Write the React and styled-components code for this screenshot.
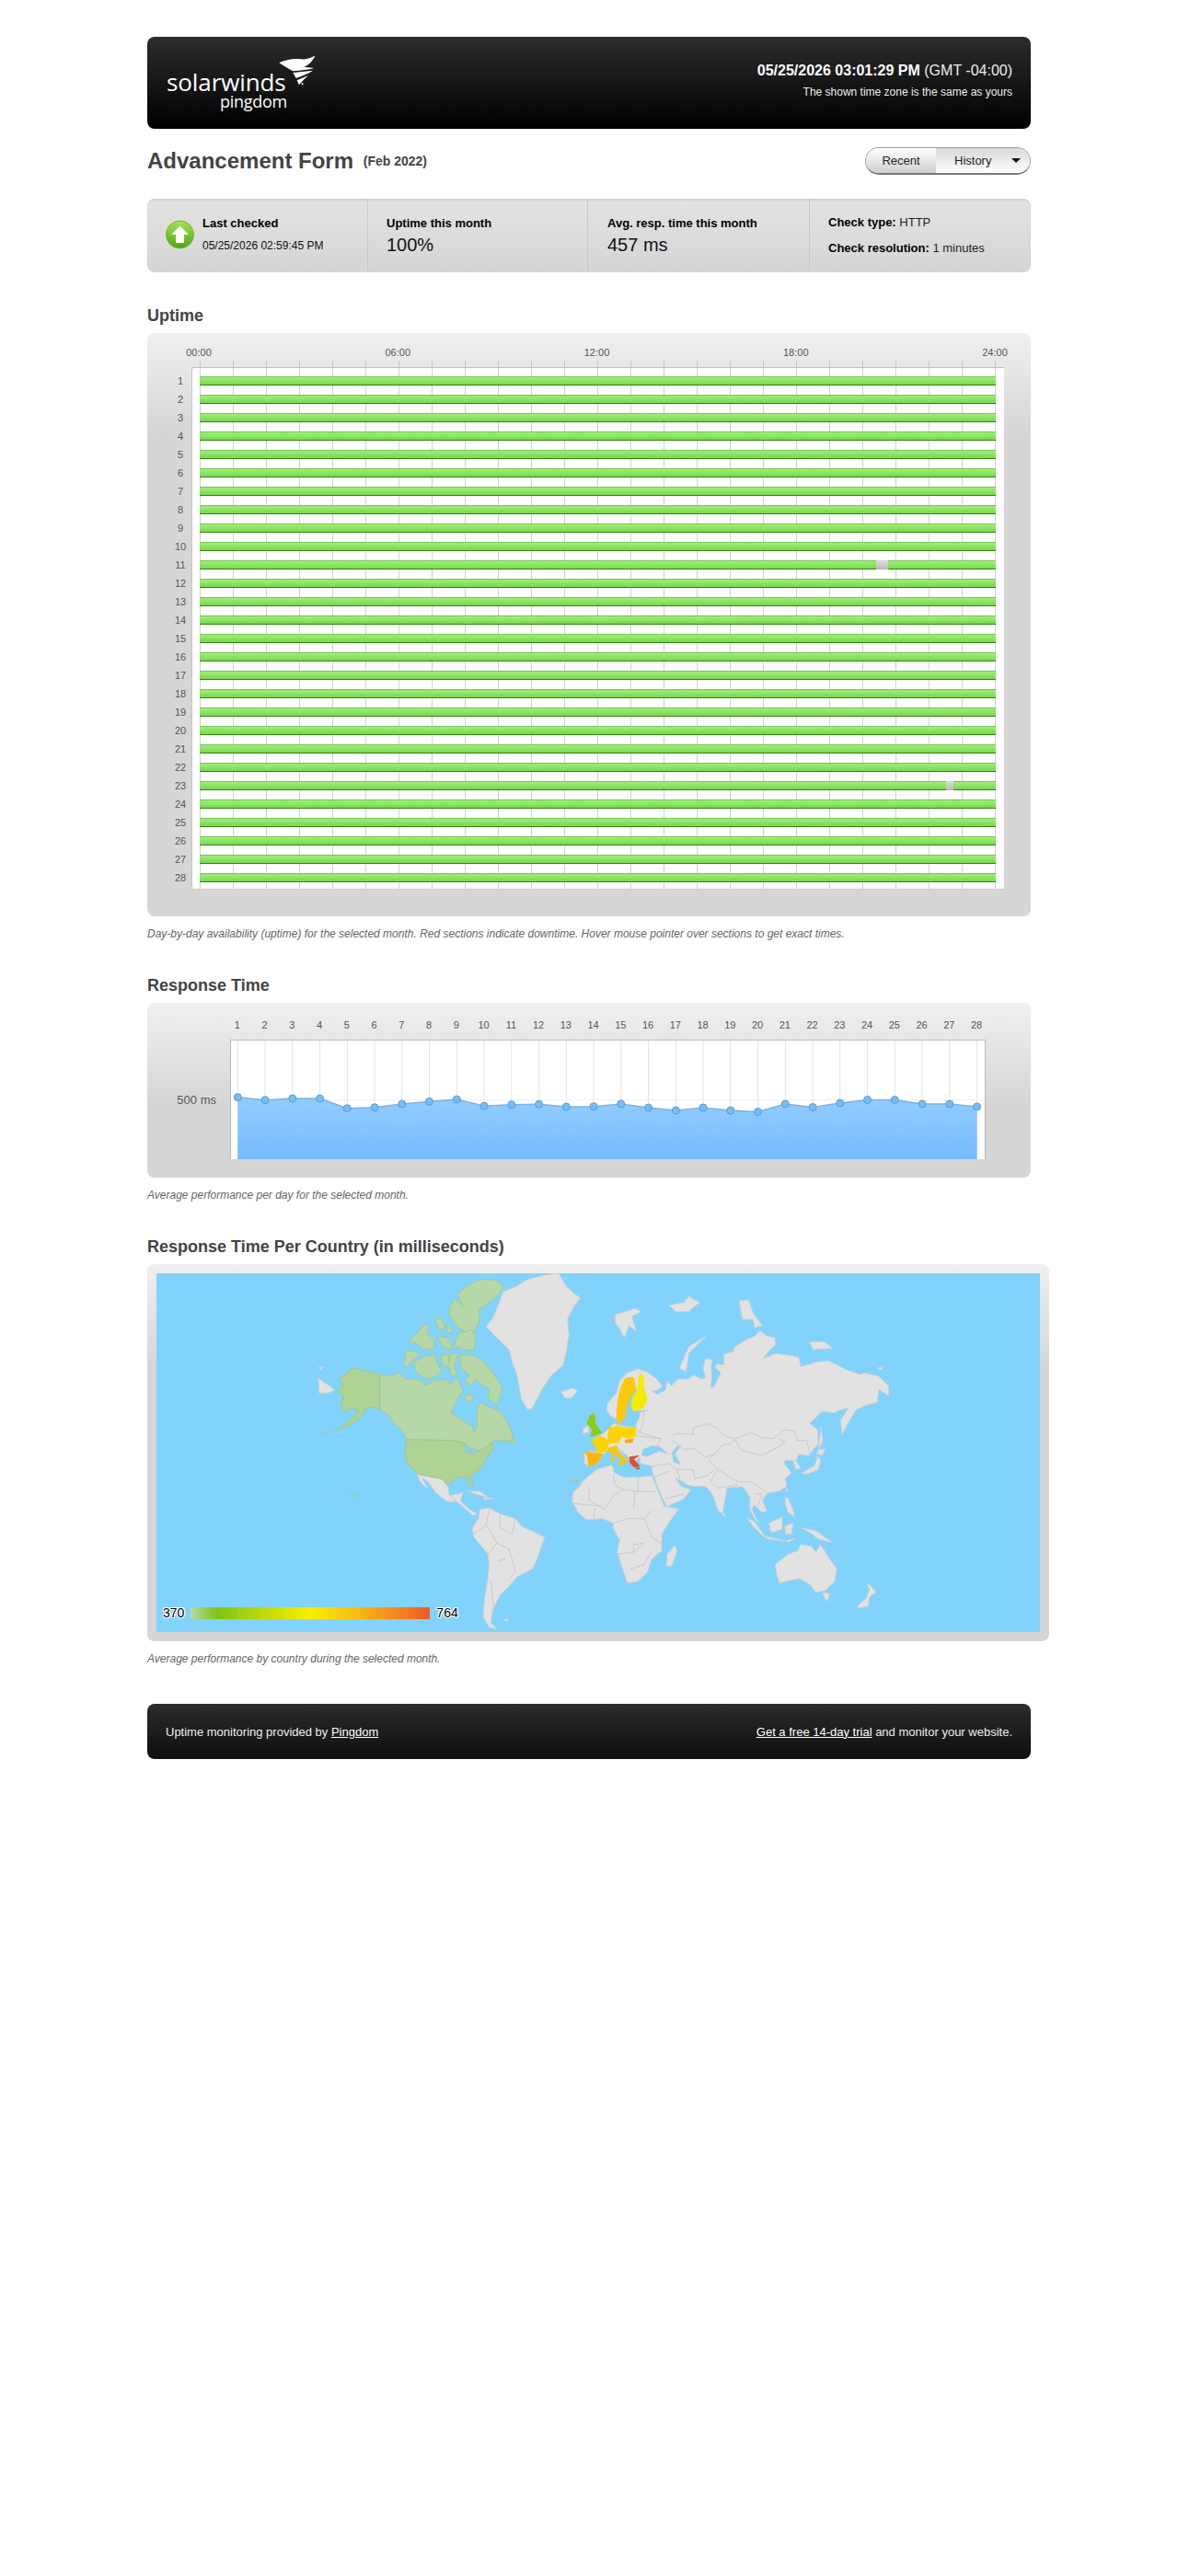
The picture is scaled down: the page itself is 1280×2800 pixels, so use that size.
import React from "react";
import styled, { createGlobalStyle } from "styled-components";

const GlobalStyle = createGlobalStyle`
  html, body {
    margin: 0;
    padding: 0;
    background: #fff;
  }
  body {
    font-family: "Liberation Sans", Arial, sans-serif;
    font-size: 13px;
    color: #444;
  }
`;

const Page = styled.div`
  width: 960px;
  margin: 0 auto;
  padding: 40px 0 60px;
`;

const DarkBar = styled.div`
  display: flex;
  justify-content: space-between;
  align-items: center;
  box-sizing: border-box;
  height: ${(props) => props.$height}px;
  padding: 0 20px;
  border-radius: 8px;
  background: linear-gradient(#2c2c2c, ${(props) => props.$end});
  color: #eee;
`;

const Logo = styled.div`
  position: relative;
  width: 170px;
  height: 70px;
  color: #fff;
  font-family: "Open Sans", sans-serif;
`;

const LogoName = styled.div`
  position: absolute;
  left: 1px;
  top: 16px;
  font-size: 26px;
  line-height: 36px;
  letter-spacing: -0.1px;
`;

const LogoSub = styled.div`
  position: absolute;
  left: 59px;
  top: 43px;
  font-size: 18px;
  line-height: 24px;
  letter-spacing: -0.3px;
`;

const LogoWing = styled.svg`
  position: absolute;
  left: 0;
  top: 0;
`;

const Clock = styled.div`
  text-align: right;
  margin-top: -7px;
`;

const ClockTime = styled.div`
  font-size: 16px;
  line-height: 20px;
  color: #eee;

  strong {
    color: #fff;
  }
`;

const ClockNote = styled.div`
  font-size: 12px;
  line-height: 14px;
  margin-top: 6px;
`;

const TitleRow = styled.div`
  display: flex;
  justify-content: space-between;
  align-items: center;
  height: 30px;
  margin-top: 20px;
`;

const Title = styled.h1`
  margin: 0;
  font-size: 24px;
  line-height: 30px;
  font-weight: bold;
  color: #444;

  small {
    font-size: 14px;
    margin-left: 4px;
    vertical-align: 3px;
  }
`;

const Toggle = styled.div`
  display: flex;
  width: 180px;
  height: 30px;
  box-sizing: border-box;
  border: 1px solid #9a9a9a;
  border-bottom: 2px solid #777;
  border-radius: 15px;
  overflow: hidden;
`;

const ToggleItem = styled.div`
  display: flex;
  align-items: center;
  justify-content: ${(props) => (props.$active ? "space-between" : "center")};
  box-sizing: border-box;
  width: ${(props) => (props.$active ? 102 : 76)}px;
  padding: ${(props) => (props.$active ? "0 10px 0 20px" : "0")};
  font-size: 13px;
  color: #222;
  background: ${(props) =>
    props.$active
      ? "linear-gradient(#d8d8d8, #fff)"
      : "linear-gradient(#fff, #cfcfcf)"};
`;

const Caret = styled.span`
  width: 0;
  height: 0;
  border-left: 5px solid transparent;
  border-right: 5px solid transparent;
  border-top: 5px solid #111;
`;

const StatsBar = styled.div`
  display: flex;
  height: 80px;
  margin-top: 26px;
  border-radius: 8px;
  background: linear-gradient(#e3e3e3, #d5d5d5);
  box-shadow: inset 0 2px 2px rgba(0, 0, 0, 0.08);
  color: #000;
`;

const StatCell = styled.div`
  box-sizing: border-box;
  display: ${(props) => (props.$row ? "flex" : "block")};
  gap: 8px;
  width: ${(props) => props.$width}px;
  padding: ${(props) => props.$top || 20}px 0 0 ${(props) => props.$left || 20}px;
  border-left: ${(props) => (props.$first ? "none" : "1px solid #c8c8c8")};
`;

const StatLabel = styled.div`
  font-size: 13px;
  line-height: 14px;
  font-weight: bold;
`;

const StatDate = styled.div`
  font-size: 12px;
  line-height: 14px;
  margin-top: 10px;
  color: #111;
`;

const StatValue = styled.div`
  font-size: 20px;
  line-height: 24px;
  margin-top: 4px;
  color: #111;
`;

const StatLine = styled.div`
  font-size: 13px;
  line-height: 14px;
  margin-top: ${(props) => props.$gap || 0}px;
  color: #222;

  strong {
    color: #000;
  }
`;

const StatusIcon = styled.svg`
  flex: none;
  margin-top: 3px;
`;

const Heading = styled.h2`
  margin: ${(props) => props.$top}px 0 8px;
  font-size: 18px;
  line-height: 22px;
  font-weight: bold;
  color: #444;
`;

const Panel = styled.div`
  box-sizing: border-box;
  width: ${(props) => props.$width || 960}px;
  padding: ${(props) => props.$padding};
  border-radius: 8px;
  background: linear-gradient(#f0f0f0, #d6d6d6 110px);
`;

const Caption = styled.p`
  margin: 12px 0 0;
  font-size: 12px;
  line-height: 14px;
  font-style: italic;
  color: #666;
`;

const HourAxis = styled.div`
  display: flex;
  justify-content: space-between;
  width: 895px;
  margin-left: 41px;
`;

const AxisLabel = styled.span`
  width: ${(props) => props.$width}px;
  flex: none;
  text-align: center;
  font-size: 11px;
  line-height: 14px;
  color: #555;
`;

const Ticks = styled.div`
  width: 865px;
  height: 7px;
  margin: 2px 0 0 57px;
  background-image: linear-gradient(90deg, #c4c4c4 1px, transparent 1px);
  background-size: 36px 100%;
`;

const UptimeBody = styled.div`
  display: flex;
`;

const DayColumn = styled.div`
  display: flex;
  flex-direction: column;
  gap: 10px;
  box-sizing: border-box;
  width: 48px;
  padding: 10px 0 0 24px;
`;

const DayLabel = styled.div`
  width: 24px;
  text-align: center;
  font-size: 11px;
  line-height: 10px;
  height: 10px;
  color: #555;
`;

const UptimePlot = styled.div`
  display: flex;
  flex-direction: column;
  gap: 10px;
  box-sizing: border-box;
  width: 883px;
  padding: 9px 0 7px 8px;
  background-color: #fff;
  background-image: linear-gradient(90deg, #d2d2d2 1px, transparent 1px);
  background-size: 36px 100%;
  background-position: 8px 0;
  border-top: 1px solid #bdbdbd;
  border-left: 1px solid #c4c4c4;
  border-bottom: 1px solid #cfcfcf;
  border-radius: 3px 0 0 3px;
`;

const Bar = styled.div`
  display: flex;
  width: 865px;
  height: 10px;
`;

const BarPart = styled.div`
  box-sizing: border-box;
  flex: ${(props) => (props.$down ? "none" : "1")};
  width: ${(props) => props.$width || 0}px;
  background: ${(props) =>
    props.$down
      ? "linear-gradient(#dcdcdc, #bcbcbc)"
      : "linear-gradient(#9fef74, #78d854)"};
  border-top: 1px solid ${(props) => (props.$down ? "#d8d8d8" : "#76c655")};
  border-bottom: 1px solid ${(props) => (props.$down ? "#b8b8b8" : "#38800c")};
`;

const DayAxis = styled.div`
  display: flex;
  margin-left: 83px;
`;

const ChartRow = styled.div`
  display: flex;
  margin-top: 9px;
`;

const YAxis = styled.div`
  display: flex;
  align-items: center;
  justify-content: flex-end;
  box-sizing: border-box;
  width: 90px;
  padding-right: 15px;
  font-size: 13px;
  color: #555;
`;

const ChartFrame = styled.div`
  box-sizing: border-box;
  width: 821px;
  height: 130px;
  background: #fff;
  border: 1px solid #b8b8b8;
  border-bottom: none;

  svg {
    display: block;
  }
`;

const MapBox = styled.div`
  position: relative;
  width: 960px;
  height: 390px;
  background: #82d3fb;
  overflow: hidden;

  svg {
    display: block;
  }
`;

const Legend = styled.div`
  position: absolute;
  left: 7px;
  top: 362px;
  display: flex;
  align-items: center;
  gap: 7px;
  font-size: 14px;
  line-height: 14px;
  color: #000;
  text-shadow: 1px 0 0 #fff, -1px 0 0 #fff, 0 1px 0 #fff, 0 -1px 0 #fff,
    1px 1px 0 #fff, -1px -1px 0 #fff, 1px -1px 0 #fff, -1px 1px 0 #fff;
`;

const LegendScale = styled.div`
  width: 260px;
  height: 13px;
  background-image: linear-gradient(
      90deg,
      rgba(255, 255, 255, 0.1) 1px,
      transparent 1px
    ),
    linear-gradient(
      90deg,
      #b7d7a8 0%,
      #7cc518 11%,
      #bcd80c 30%,
      #f9ee00 50%,
      #f9be10 68%,
      #f58a1f 85%,
      #f15a24 100%
    );
  background-size: 26px 100%, 100% 100%;
`;

const Footer = styled(DarkBar)`
  margin-top: 42px;
  font-size: 13px;

  a {
    color: #fff;
    text-decoration: underline;
  }
`;

const hours = ["00:00", "06:00", "12:00", "18:00", "24:00"];
const days = Array.from({ length: 28 }, (_, i) => i + 1);

// [start px, width px] of the unknown-status patches
const outages = { 11: [735, 13], 23: [811, 8] };

const responseY = [
  1192.7, 1195.7, 1194, 1194, 1204.7, 1203.7, 1200, 1197.3, 1195, 1202.3,
  1200.7, 1200.3, 1203, 1202.7, 1200, 1204, 1207, 1204, 1207, 1208.5, 1200,
  1203.5, 1199, 1195.5, 1195.5, 1200, 1200, 1203,
];
const chartPoints = responseY.map((y, i) => [7.3 + i * 29.75, y - 1131]);
const linePath = chartPoints.map((p) => p.join(",")).join(" ");
const areaPath = `${chartPoints[0][0]},129 ${linePath} ${chartPoints[27][0]},129`;

const SEA = "#82d3fb";
const GRAY = "#e2e2e2";
const CANADA = "#b6d7a8";
const USA = "#aed394";

// traced from the left half of the map
const westLand = [
  // greenland, iceland, svalbard
  "M620,60 L660,45 700,20 760,5 800,0 825,40 850,65 872,80 850,110 830,150 835,200 825,260 815,300 780,330 745,380 715,440 700,445 680,410 665,330 650,290 640,250 600,210 565,175 590,140 610,90Z",
  "M810,385 L850,375 862,385 840,408 820,405Z",
  "M985,135 L1020,125 1050,115 1070,125 1040,140 1055,190 1030,170 1015,210 1000,180 985,160Z",
  // chukotka tip
  "M18,342 L50,365 72,380 45,392 20,390Z",
  "M20,305 L32,308 24,314Z",
  // mexico and central america
  "M340,655 L390,665 420,670 440,695 445,725 470,720 490,715 480,740 510,770 535,785 520,790 500,770 470,745 440,745 400,715 375,680 355,665 375,705 350,680Z",
  "M505,710 L545,712 570,730 530,720Z",
  "M555,730 L590,735 560,738Z",
  // south america
  "M545,770 L575,765 610,785 660,800 680,825 755,860 735,920 715,965 665,990 640,1020 610,1050 585,1100 580,1140 600,1160 575,1155 555,1120 560,1060 570,1000 575,950 570,915 525,860 520,830 540,800Z",
  "M622,1130 L638,1127 630,1136Z",
];

const westBorders = [
  "M575,770 L565,820 525,850",
  "M565,820 L600,880 640,900 660,970 640,1000",
  "M600,880 L570,915",
  "M600,940 L630,930",
  "M580,1000 L590,1100",
  "M660,800 L650,850",
  "M610,790 L610,830 650,850",
  "M445,725 L470,745",
];

const canadaLand = [
  // arctic archipelago
  "M470,70 L510,35 550,20 600,22 622,45 600,75 570,100 545,115 540,130 545,150 530,185 500,192 470,175 445,135 445,110 465,85 490,105Z",
  "M475,195 L520,185 532,215 525,250 490,250 462,235 468,210Z",
  "M310,225 L340,195 365,165 380,175 370,195 395,215 395,245 360,250 335,225Z",
  "M398,145 L420,150 432,180 410,182Z",
  "M435,165 L458,190 440,197Z",
  "M405,205 L440,210 458,248 425,242Z",
  "M295,300 L305,252 338,255 345,268 320,290 305,305Z",
  "M330,290 L365,270 398,265 405,290 420,320 385,345 360,340 335,320Z",
  "M415,268 L442,262 445,300 425,305Z",
  "M450,260 L474,262 462,300 470,332 450,337 442,300Z",
  "M478,270 L495,265 525,268 555,285 590,330 618,375 600,430 570,405 575,375 545,360 530,345 515,365 495,355 510,330 485,315Z",
  "M495,400 L520,395 520,420 500,415Z",
  "M632,520 L665,555 635,550Z",
  // mainland with hudson bay cut out of the outline
  "M218,330 L250,335 285,325 300,345 340,345 370,365 395,350 430,345 450,360 470,340 490,385 470,410 450,455 490,480 520,500 525,520 535,500 535,440 545,420 580,440 610,450 635,490 650,520 650,545 620,545 590,545 560,570 525,585 510,575 495,555 460,545 305,542 290,510 265,490 245,460 218,445Z",
];

const usaLand = [
  "M85,345 L135,308 175,320 218,328 218,445 195,435 175,440 160,465 130,490 80,512 120,480 150,445 135,440 100,450 92,425 100,400 80,385 100,360Z",
  "M305,542 L460,545 495,555 510,590 530,585 560,570 585,555 590,570 565,600 550,635 510,665 525,695 510,690 500,665 470,665 440,690 420,670 390,665 345,655 310,625 300,590Z",
  "M28,520 L40,518 36,522Z",
  "M50,516 L58,514 56,519Z",
  "M122,712 L130,716 126,718Z",
  "M138,720 L147,726 140,729Z",
];

const greatLakes = [
  "M490,565 L505,560 515,585 505,590Z",
  "M515,570 L540,580 520,590Z",
];

// traced from the right half of the map
const eastLand = [
  // eurasia outline, clockwise from norway
  "M130,465 L118,445 120,425 150,390 160,350 185,325 220,312 250,322 280,345 300,368 285,380 265,385 285,395 310,380 315,350 328,368 350,345 385,345 400,332 430,345 440,340 432,310 440,278 462,282 458,300 460,345 455,370 465,375 480,345 490,325 470,305 478,295 500,300 500,265 530,255 535,240 575,215 600,205 618,187 640,205 665,210 668,235 650,250 625,280 665,262 720,268 745,275 750,305 800,290 840,285 900,315 945,330 960,325 1003,335 1037,368 1037,400 1005,378 1000,420 965,430 930,445 915,470 885,525 880,480 905,440 880,445 860,455 820,450 780,490 805,510 808,555 775,595 745,590 735,612 750,635 735,640 725,610 700,610 695,620 720,650 700,670 705,695 680,710 640,718 625,740 640,775 625,780 600,755 590,765 600,790 615,815 600,800 585,770 585,730 560,695 510,700 495,785 480,770 462,720 440,695 400,695 380,690 340,665 360,695 392,705 370,735 315,760 300,735 272,665 265,640 268,630 228,620 225,598 225,595 205,630 192,605 185,595 155,570 150,570 178,600 185,610 180,605 150,562 125,575 105,592 90,615 60,630 45,620 45,582 100,582 100,562 70,545 95,530 110,520 125,505 140,490 165,497 212,503 215,490 225,470 225,455 255,447 205,448 198,430 205,402 220,382 205,378 192,400 180,440 178,465 160,490 148,475Z",
  // arctic islands
  "M355,310 L385,240 440,205 435,212 385,260 380,300 375,320Z",
  "M320,105 L370,95 385,75 420,95 385,125 345,125Z",
  "M550,90 L580,88 595,130 625,170 600,178 595,150 560,150Z",
  "M780,225 L825,222 855,245 790,248Z",
  "M1000,310 L1015,305 1015,315Z",
  // ireland and the east asian islands
  "M42,505 L60,498 58,520 40,522Z",
  "M815,500 L822,545 800,600 810,570Z",
  "M808,575 L830,572 820,595 805,590Z",
  "M752,652 L795,628 806,598 815,610 808,640 770,655Z",
  "M705,700 L708,712 700,712Z",
  // africa, madagascar
  "M5,745 L8,715 30,695 38,680 85,640 135,625 142,650 175,665 220,665 265,660 305,760 352,768 330,800 297,850 297,905 265,930 250,975 220,1005 185,1010 170,965 152,910 160,870 138,830 140,815 105,800 50,803 25,780Z",
  "M340,888 L347,905 330,955 312,955 315,915Z",
  // south east asia
  "M500,780 L505,793 497,790Z",
  "M575,798 L600,810 635,860 625,855 595,825Z",
  "M625,855 L690,870 700,875 640,865Z",
  "M645,815 L690,795 690,835 655,845Z",
  "M700,825 L725,815 720,850 700,850Z",
  "M750,830 L800,840 855,880 805,865 780,845Z",
  "M700,730 L710,735 725,770 730,795 710,780 700,755Z",
  "M700,872 L730,865 712,877Z",
  // australia, new zealand
  "M667,950 L710,915 740,905 750,885 785,890 800,910 815,885 840,925 868,965 860,1005 830,1035 800,1040 780,1015 745,995 680,1010 672,980Z",
  "M820,1042 L845,1045 835,1070Z",
  "M965,1010 L990,1030 995,1040 975,1055 970,1085 940,1092 935,1085 965,1060 975,1030Z",
];

const eastWater = [
  "M235,575 L265,562 290,565 320,590 290,580 250,597 232,595Z",
  "M345,565 L360,560 340,590 360,625 335,615 330,585Z",
];

const eastBorders = [
  "M330,530 L345,522 400,525 400,505 445,490 480,505 500,530 535,540 590,520 620,535 660,540 700,510 730,515 740,545 770,545 780,590",
  "M535,540 L555,575 620,595 680,565 700,550 680,540",
  "M330,545 L370,575 400,570 440,600 470,590 495,560 525,555 535,540",
  "M470,590 L450,610 480,640 545,680 590,680 640,715",
  "M400,640 L405,670 445,660 470,640",
  "M345,640 L400,640",
  "M265,630 L320,620 345,640 360,680",
  "M270,665 L320,645",
  "M310,735 L370,720",
  "M480,640 L455,680 480,700 545,690",
  "M240,450 L235,490 225,520 295,540 280,570",
  "M215,530 L295,540",
  "M212,503 L225,520",
  "M150,470 L175,400 205,340",
  "M600,720 L625,720 610,760",
  "M730,615 L745,590",
  // africa
  "M60,695 L60,740 110,770",
  "M140,655 L145,690 170,705 220,712 275,712",
  "M220,665 L220,712",
  "M110,770 L140,725 170,705",
  "M205,770 L210,712",
  "M5,750 L100,760",
  "M140,815 L185,800 240,800 265,770",
  "M240,800 L265,860 295,880",
  "M155,915 L205,910 240,880",
  "M205,910 L205,885 240,880",
  "M195,965 L240,950 265,905",
  "M75,800 L78,765",
];

const countries = [
  { fill: "#8fc90e", d: "M62,465 L78,458 80,490 100,520 65,532 72,510 55,490Z" },
  { fill: "#ffd306", d: "M70,545 L95,530 125,545 120,580 90,585 78,560Z" },
  { fill: "#ffd306", d: "M125,505 L160,497 165,530 158,552 125,553 122,530Z" },
  { fill: "#ffd306", d: "M163,503 L212,503 212,530 190,540 165,530Z" },
  { fill: "#f6a81a", d: "M178,545 L205,540 200,552 180,552Z" },
  { fill: "#fdc70a", d: "M180,342 L205,340 213,380 195,400 180,440 180,465 160,490 150,475 155,410 165,370Z" },
  { fill: "#f2ec00", d: "M225,328 L238,335 237,370 250,410 235,440 205,448 198,430 205,400 220,380Z" },
  { fill: "#fbb511", d: "M45,582 L105,590 85,620 60,630 55,595Z" },
  { fill: "#f9c40a", d: "M125,570 L150,562 155,585 185,610 165,628 155,620 170,612 145,590 125,580Z" },
  { fill: "#f9c40a", d: "M135,588 L142,612 133,612Z" },
  { fill: "#e4492a", d: "M192,600 L222,595 205,605 225,630 205,630 195,618Z" },
  { fill: "#e4492a", d: "M210,634 L225,636 222,639Z" },
  { fill: "#f6a81a", d: "M5,676 L10,676 8,679Z" },
  { fill: "#f6a81a", d: "M18,676 L23,676 20,679Z" },
];

const WorldMap = () => (
  <svg width="960" height="390" viewBox="0 0 960 390">
    <g
      transform="translate(170 0) scale(0.3333)"
      strokeWidth="3"
      strokeLinejoin="round"
    >
      {westLand.map((d) => (
        <path key={d} d={d} fill={GRAY} stroke="#d0d0d0" />
      ))}
      {westBorders.map((d) => (
        <path key={d} d={d} fill="none" stroke="#c9c9c9" />
      ))}
      {canadaLand.map((d) => (
        <path key={d} d={d} fill={CANADA} stroke="#a5c894" />
      ))}
      {usaLand.map((d) => (
        <path key={d} d={d} fill={USA} stroke="#a0c888" />
      ))}
      {greatLakes.map((d) => (
        <path key={d} d={d} fill={SEA} stroke="#a5c894" />
      ))}
    </g>
    <g
      transform="translate(450 0) scale(0.3333)"
      strokeWidth="3"
      strokeLinejoin="round"
    >
      {eastLand.map((d) => (
        <path key={d} d={d} fill={GRAY} stroke="#d0d0d0" />
      ))}
      {eastWater.map((d) => (
        <path key={d} d={d} fill={SEA} stroke="#d0d0d0" />
      ))}
      {eastBorders.map((d) => (
        <path key={d} d={d} fill="none" stroke="#c9c9c9" />
      ))}
      {countries.map((c) => (
        <path key={c.d} d={c.d} fill={c.fill} stroke={c.fill} />
      ))}
    </g>
  </svg>
);

const ResponseChart = () => (
  <svg width="819" height="129" viewBox="0 0 819 129">
    <defs>
      <linearGradient id="areaFill" x1="0" y1="0" x2="0" y2="1">
        <stop offset="0" stopColor="#8fcbff" />
        <stop offset="1" stopColor="#6fb8ff" />
      </linearGradient>
    </defs>
    <line x1="0" x2="819" y1="64.5" y2="64.5" stroke="#f0f0f0" />
    {chartPoints.map(([x]) => (
      <line key={x} x1={x} x2={x} y1="0" y2="129" stroke="#e4e4e4" />
    ))}
    <polygon points={areaPath} fill="url(#areaFill)" fillOpacity="0.96" />
    <polyline
      points={linePath}
      fill="none"
      stroke="#7eb3dd"
      strokeWidth="1.5"
    />
    {chartPoints.map(([x, y]) => (
      <circle
        key={x}
        cx={x}
        cy={y}
        r="4"
        fill="#74bdf6"
        stroke="#5c9ccf"
      />
    ))}
  </svg>
);

const App = () => (
  <>
    <GlobalStyle />
    <Page>
      <DarkBar $height={100} $end="#000">
        <Logo>
          <LogoWing width="170" height="70" viewBox="0 0 170 70">
            <g fill="#fff" transform="translate(-30 -25) scale(0.3333)">
              <path d="M460,115 C478,106 505,100 530,103 C545,105 558,100 577,92 C570,108 558,122 540,128 L575,132 C555,137 530,140 505,142 C490,135 475,125 460,115Z" />
              <path d="M505,147 L570,140 C555,150 535,158 515,165Z" />
              <path d="M518,172 L556,156 C545,165 535,175 525,187Z" />
              <circle cx="536" cy="184" r="3" />
            </g>
          </LogoWing>
          <LogoName>solarwinds</LogoName>
          <LogoSub>pingdom</LogoSub>
        </Logo>
        <Clock>
          <ClockTime>
            <strong>05/25/2026 03:01:29 PM</strong> (GMT -04:00)
          </ClockTime>
          <ClockNote>The shown time zone is the same as yours</ClockNote>
        </Clock>
      </DarkBar>

      <TitleRow>
        <Title>
          Advancement Form <small>(Feb 2022)</small>
        </Title>
        <Toggle>
          <ToggleItem>Recent</ToggleItem>
          <ToggleItem $active>
            History
            <Caret />
          </ToggleItem>
        </Toggle>
      </TitleRow>

      <StatsBar>
        <StatCell $row $first $width={239} $left={20} $top={20}>
          <StatusIcon width="32" height="32" viewBox="0 0 32 32">
            <defs>
              <linearGradient id="upFill" x1="0" y1="0" x2="0" y2="1">
                <stop offset="0" stopColor="#a4e35a" />
                <stop offset="1" stopColor="#4da510" />
              </linearGradient>
            </defs>
            <circle cx="15.5" cy="16" r="15" fill="url(#upFill)" stroke="#6fb52c" />
            <path
              d="M15.5 7 L24 15.5 L19.5 15.5 L19.5 24.5 L11.5 24.5 L11.5 15.5 L7 15.5 Z"
              fill="#fff"
              stroke="#fff"
              strokeLinejoin="round"
            />
          </StatusIcon>
          <div>
            <StatLabel>Last checked</StatLabel>
            <StatDate>05/25/2026 02:59:45 PM</StatDate>
          </div>
        </StatCell>
        <StatCell $width={239}>
          <StatLabel>Uptime this month</StatLabel>
          <StatValue>100%</StatValue>
        </StatCell>
        <StatCell $width={241} $left={21}>
          <StatLabel>Avg. resp. time this month</StatLabel>
          <StatValue>457 ms</StatValue>
        </StatCell>
        <StatCell $width={241} $top={19}>
          <StatLine>
            <strong>Check type:</strong> HTTP
          </StatLine>
          <StatLine $gap={14}>
            <strong>Check resolution:</strong> 1 minutes
          </StatLine>
        </StatCell>
      </StatsBar>

      <Heading $top={36}>Uptime</Heading>
      <Panel $padding="14px 0 29px">
        <HourAxis>
          {hours.map((h) => (
            <AxisLabel key={h} $width={30}>
              {h}
            </AxisLabel>
          ))}
        </HourAxis>
        <Ticks />
        <UptimeBody>
          <DayColumn>
            {days.map((d) => (
              <DayLabel key={d}>{d}</DayLabel>
            ))}
          </DayColumn>
          <UptimePlot>
            {days.map((d) => (
              <Bar key={d}>
                {outages[d] ? (
                  <>
                    <BarPart style={{ flex: `0 0 ${outages[d][0]}px` }} />
                    <BarPart $down $width={outages[d][1]} />
                    <BarPart />
                  </>
                ) : (
                  <BarPart />
                )}
              </Bar>
            ))}
          </UptimePlot>
        </UptimeBody>
      </Panel>
      <Caption>
        Day-by-day availability (uptime) for the selected month. Red sections
        indicate downtime. Hover mouse pointer over sections to get exact times.
      </Caption>

      <Heading $top={38}>Response Time</Heading>
      <Panel $padding="17px 0 20px">
        <DayAxis>
          {days.map((d) => (
            <AxisLabel key={d} $width={29.75}>
              {d}
            </AxisLabel>
          ))}
        </DayAxis>
        <ChartRow>
          <YAxis>500 ms</YAxis>
          <ChartFrame>
            <ResponseChart />
          </ChartFrame>
        </ChartRow>
      </Panel>
      <Caption>Average performance per day for the selected month.</Caption>

      <Heading $top={38}>Response Time Per Country (in milliseconds)</Heading>
      <Panel $width={980} $padding="10px">
        <MapBox>
          <WorldMap />
          <Legend>
            <span>370</span>
            <LegendScale />
            <span>764</span>
          </Legend>
        </MapBox>
      </Panel>
      <Caption>Average performance by country during the selected month.</Caption>

      <Footer $height={60} $end="#0e0e0e">
        <span>
          Uptime monitoring provided by <a href="#pingdom">Pingdom</a>
        </span>
        <span>
          <a href="#trial">Get a free 14-day trial</a> and monitor your website.
        </span>
      </Footer>
    </Page>
  </>
);

export default App;
